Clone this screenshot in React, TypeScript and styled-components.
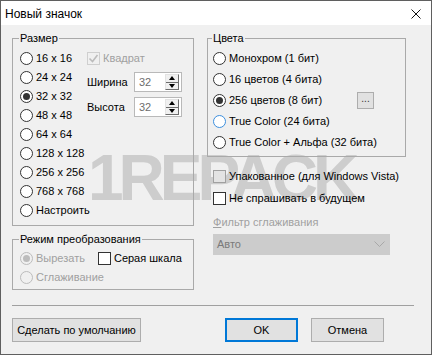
import React from "react";
import styled, { createGlobalStyle, css } from "styled-components";

const GlobalStyle = createGlobalStyle`
  html, body {
    margin: 0;
    padding: 0;
    background: #f0f0f0;
  }
  * {
    box-sizing: border-box;
  }
`;

const Window = styled.div`
  position: relative;
  width: 432px;
  height: 355px;
  display: flex;
  flex-direction: column;
  border: 1px solid #5f5f5f;
  background: #f0f0f0;
  font-family: "Liberation Sans", Arial, sans-serif;
  font-size: 11px;
  line-height: 13px;
  color: #000;
  overflow: hidden;
`;

const Watermark = styled.div`
  position: absolute;
  left: 87px;
  top: 145px;
  z-index: 0;
  font: bold 64px/64px "Liberation Sans", Arial, sans-serif;
  letter-spacing: -5px;
  color: #cdcdcd;
  white-space: nowrap;
  pointer-events: none;
`;

const TitleBar = styled.div`
  height: 24px;
  flex: none;
  display: flex;
  align-items: center;
  justify-content: space-between;
  padding: 2px 10px 0 4px;
  background: #fff;
`;

const Title = styled.span`
  font-size: 12px;
  line-height: 16px;
`;

const Body = styled.div`
  position: relative;
  z-index: 1;
  flex: 1;
  display: flex;
  flex-direction: column;
  padding: 7px 17px 11px 11px;
`;

const TopRow = styled.div`
  display: flex;
  gap: 13px;
`;

const Column = styled.div<{ $w: number }>`
  width: ${({ $w }) => $w}px;
  display: flex;
  flex-direction: column;
`;

const GroupBox = styled.fieldset<{ $pad: string; $mt?: number }>`
  margin: ${({ $mt }) => $mt ?? 0}px 0 0;
  padding: ${({ $pad }) => $pad};
  border: 1px solid #a9a9a9;
  min-width: 0;
`;

const Legend = styled.legend`
  padding: 0 1px;
  margin-left: -1px;
  line-height: 13px;
`;

const SizeLayout = styled.div`
  display: flex;
`;

const List = styled.div<{ $w?: number }>`
  display: flex;
  flex-direction: column;
  width: ${({ $w }) => ($w ? `${$w}px` : "auto")};
  flex: ${({ $w }) => ($w ? "none" : 1)};
`;

const OptionRow = styled.label<{ $h: number; $disabled?: boolean; $mt?: number }>`
  display: flex;
  align-items: center;
  gap: 3px;
  height: ${({ $h }) => $h}px;
  margin-top: ${({ $mt }) => $mt ?? 0}px;
  color: ${({ $disabled }) => ($disabled ? "#a0a0a0" : "#000")};
  white-space: nowrap;
`;

const Circle = styled.span<{ $checked?: boolean; $disabled?: boolean; $focus?: boolean }>`
  flex: none;
  width: 13px;
  height: 13px;
  border-radius: 50%;
  display: flex;
  align-items: center;
  justify-content: center;
  background: ${({ $disabled }) => ($disabled ? "#f0f0f0" : "#fff")};
  border: 1px solid
    ${({ $disabled, $focus }) => ($disabled ? "#bcbcbc" : $focus ? "#3c8fde" : "#333")};

  &::after {
    content: "";
    display: ${({ $checked }) => ($checked ? "block" : "none")};
    width: 7px;
    height: 7px;
    border-radius: 50%;
    background: ${({ $disabled }) => ($disabled ? "#bcbcbc" : "#333")};
  }
`;

const Box = styled.span<{ $disabled?: boolean; $muted?: boolean }>`
  flex: none;
  width: 13px;
  height: 13px;
  display: flex;
  align-items: center;
  justify-content: center;
  border: 1px solid ${({ $disabled, $muted }) => ($disabled ? "#cfcfcf" : $muted ? "#a0a0a0" : "#333")};
  background: ${({ $disabled, $muted }) => ($disabled ? "#f0f0f0" : $muted ? "#e3e3e3" : "#fff")};
`;

const SizeOptions = styled.div`
  display: flex;
  flex-direction: column;
`;

const SpinRow = styled.div<{ $mt: number }>`
  display: flex;
  align-items: center;
  height: 20px;
  margin-top: ${({ $mt }) => $mt}px;
`;

const SpinLabel = styled.span`
  width: 47px;
`;

const SpinField = styled.div`
  width: 48px;
  height: 20px;
  display: flex;
  align-items: center;
  padding: 0 2px 0 4px;
  border: 1px solid #b9b9b9;
  background: #fff;
  color: #6d6d6d;
`;

const SpinValue = styled.span`
  flex: 1;
`;

const SpinButtons = styled.div`
  display: flex;
  flex-direction: column;
  width: 14px;
  height: 16px;
  border: 1px solid #6d6d6d;
  border-top-color: #e3e3e3;
  border-left-color: #e3e3e3;
`;

const SpinHalf = styled.div<{ $up?: boolean }>`
  flex: 1;
  display: flex;
  align-items: center;
  justify-content: center;
  background: #f0f0f0;
  border-bottom: ${({ $up }) => ($up ? "1px solid #6d6d6d" : "none")};

  &::after {
    content: "";
    border-left: 3px solid transparent;
    border-right: 3px solid transparent;
    ${({ $up }) =>
      $up ? "border-bottom: 4px solid #000;" : "border-top: 4px solid #000;"}
  }
`;

const ColorRow = styled.div`
  display: flex;
  align-items: center;
  justify-content: space-between;
  padding-right: 25px;
`;

const SmallButton = styled.button`
  width: 17px;
  height: 17px;
  padding: 0 0 4px;
  font: inherit;
  font-size: 10px;
  line-height: 10px;
  color: #333;
  background: #e1e1e1;
  border: 1px solid #adadad;
`;

const CheckList = styled.div`
  display: flex;
  flex-direction: column;
  margin: 8px 0 0 6px;
`;

const FieldLabel = styled.div`
  margin: 7px 0 0 6px;
  color: #a0a0a0;
`;

const Mnemonic = styled.span`
  text-decoration: underline;
`;

const Select = styled.div`
  width: 177px;
  height: 21px;
  margin: 5px 0 0 6px;
  display: flex;
  align-items: center;
  justify-content: space-between;
  padding: 0 5px 0 4px;
  background: #cccccc;
  color: #7a7a7a;
`;

const Separator = styled.div`
  margin-top: 15px;
  border-top: 1px solid #a0a0a0;
`;

const Footer = styled.div`
  display: flex;
  align-items: center;
  gap: 13px;
  margin-top: 12px;
  padding-right: 30px;
`;

const Button = styled.button<{ $w: number; $default?: boolean; $push?: boolean }>`
  width: ${({ $w }) => $w}px;
  height: 24px;
  padding: 0;
  font: inherit;
  color: #000;
  background: #e1e1e1;
  border: 1px solid #adadad;
  margin-left: ${({ $push }) => ($push ? "auto" : "0")};

  ${({ $default }) =>
    $default &&
    css`
      border-color: #0078d7;
      box-shadow: inset 0 0 0 1px #0078d7;
    `}
`;

const CheckMark = () => (
  <svg width="11" height="11" viewBox="0 0 11 11">
    <polyline points="1.5,5.5 4.5,8.5 9.5,2" fill="none" stroke="#bcbcbc" strokeWidth="1.6" />
  </svg>
);

const Chevron = () => (
  <svg width="11" height="7" viewBox="0 0 11 7">
    <polyline points="0.5,0.5 5.5,5.5 10.5,0.5" fill="none" stroke="#a8a8a8" strokeWidth="1" />
  </svg>
);

const CloseIcon = () => (
  <svg width="10" height="10" viewBox="0 0 10 10">
    <path d="M0.5 0.5 L9.5 9.5 M9.5 0.5 L0.5 9.5" stroke="#111" strokeWidth="1" />
  </svg>
);

const sizes = ["16 x 16", "24 x 24", "32 x 32", "48 x 48", "64 x 64", "128 x 128", "256 x 256", "768 x 768", "Настроить"];

const colors = [
  "Монохром (1 бит)",
  "16 цветов (4 бита)",
  "256 цветов (8 бит)",
  "True Color (24 бита)",
  "True Color + Альфа (32 бита)",
];

const Spin = ({ label, value, mt }: { label: string; value: string; mt: number }) => (
  <SpinRow $mt={mt}>
    <SpinLabel>{label}</SpinLabel>
    <SpinField>
      <SpinValue>{value}</SpinValue>
      <SpinButtons>
        <SpinHalf $up />
        <SpinHalf />
      </SpinButtons>
    </SpinField>
  </SpinRow>
);

export default function App() {
  return (
    <>
      <GlobalStyle />
      <Window>
        <Watermark>1REPACK</Watermark>
        <TitleBar>
          <Title>Новый значок</Title>
          <CloseIcon />
        </TitleBar>
        <Body>
          <TopRow>
            <Column $w={182}>
              <GroupBox $pad="4px 6px 5px 7px">
                <Legend>Размер</Legend>
                <SizeLayout>
                  <List $w={67}>
                    {sizes.map((s, i) => (
                      <OptionRow key={s} $h={19}>
                        <Circle $checked={i === 2} />
                        {s}
                      </OptionRow>
                    ))}
                  </List>
                  <SizeOptions>
                    <OptionRow $h={19} $disabled>
                      <Box $disabled>
                        <CheckMark />
                      </Box>
                      Квадрат
                    </OptionRow>
                    <Spin label="Ширина" value="32" mt={4} />
                    <Spin label="Высота" value="32" mt={5} />
                  </SizeOptions>
                </SizeLayout>
              </GroupBox>
              <GroupBox $pad="3px 6px 2px 7px" $mt={7}>
                <Legend>Режим преобразования</Legend>
                <List>
                  <OptionRow $h={19}>
                    <OptionRow $h={19} $disabled>
                      <Circle $checked $disabled />
                      Вырезать
                    </OptionRow>
                    <OptionRow $h={19} style={{ marginLeft: 10 }}>
                      <Box />
                      Серая шкала
                    </OptionRow>
                  </OptionRow>
                  <OptionRow $h={19} $disabled>
                    <Circle $disabled />
                    Сглаживание
                  </OptionRow>
                </List>
              </GroupBox>
            </Column>
            <Column $w={199}>
              <GroupBox $pad="3px 6px 3px 5px">
                <Legend>Цвета</Legend>
                <List>
                  {colors.map((c, i) => (
                    <ColorRow key={c}>
                      <OptionRow $h={21}>
                        <Circle $checked={i === 2} $focus={i === 3} />
                        {c}
                      </OptionRow>
                      {i === 2 && <SmallButton>...</SmallButton>}
                    </ColorRow>
                  ))}
                </List>
              </GroupBox>
              <CheckList>
                <OptionRow $h={22}>
                  <Box $muted />
                  Упакованное (для Windows Vista)
                </OptionRow>
                <OptionRow $h={22}>
                  <Box />
                  Не спрашивать в будущем
                </OptionRow>
              </CheckList>
              <FieldLabel>
                <Mnemonic>Ф</Mnemonic>ильтр сглаживания
              </FieldLabel>
              <Select>
                Авто
                <Chevron />
              </Select>
            </Column>
          </TopRow>
          <Separator />
          <Footer>
            <Button $w={129}>Сделать по умолчанию</Button>
            <Button $w={73} $default $push>
              OK
            </Button>
            <Button $w={73}>Отмена</Button>
          </Footer>
        </Body>
      </Window>
    </>
  );
}
